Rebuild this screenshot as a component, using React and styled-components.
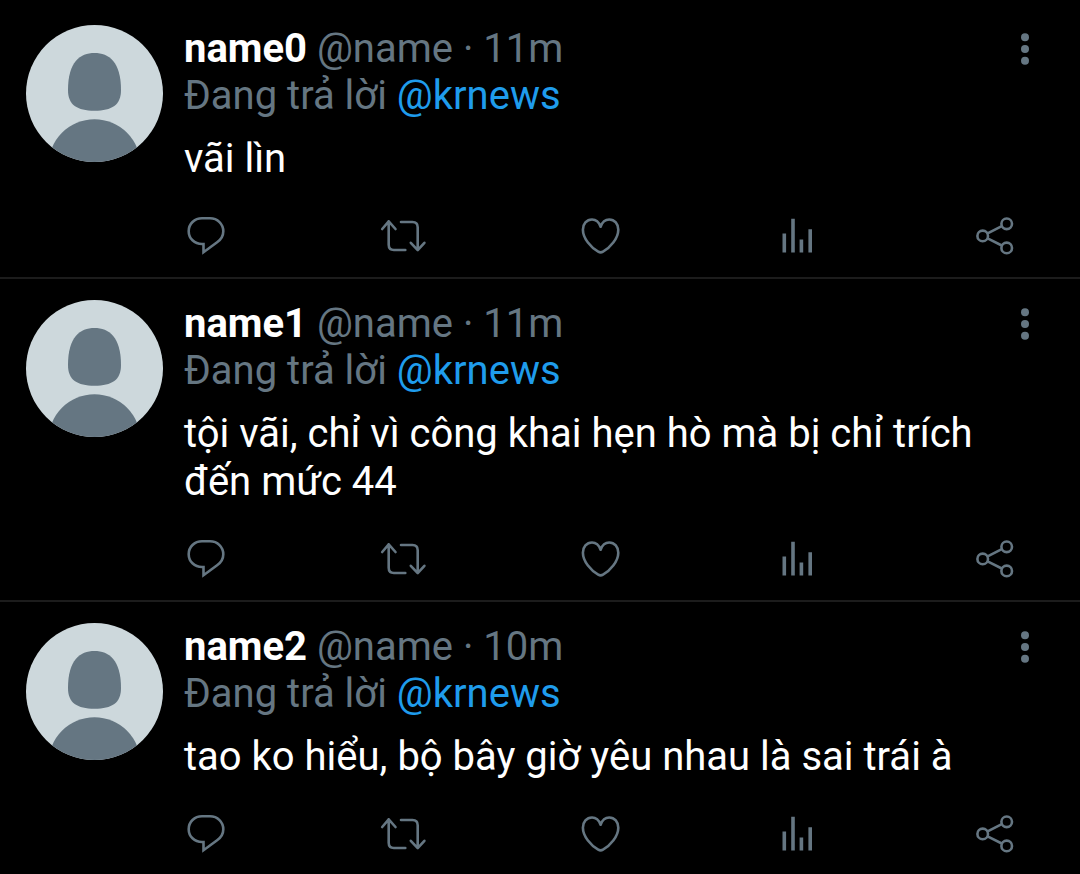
import React from 'react';
import styled, { createGlobalStyle } from 'styled-components';

const GlobalStyle = createGlobalStyle`
  :root {
    --background: #000;
    --text: #fff;
    --muted: #657682;
    --link: #1f9cec;
    --divider: #1c1c1c;
    --avatar: #cdd8dc;
  }

  body {
    margin: 0;
    background: var(--background);
    color: var(--text);
    font-family: Roboto, 'Noto Sans', sans-serif;
    font-size: 40px;
    line-height: 47px;
  }
`;

const TWEETS = [
  { name: 'name0', handle: '@name', time: '11m', replyTo: '@krnews', text: 'vãi lìn' },
  {
    name: 'name1',
    handle: '@name',
    time: '11m',
    replyTo: '@krnews',
    text: 'tội vãi, chỉ vì công khai hẹn hò mà bị chỉ trích đến mức 44',
  },
  {
    name: 'name2',
    handle: '@name',
    time: '10m',
    replyTo: '@krnews',
    text: 'tao ko hiểu, bộ bây giờ yêu nhau là sai trái à',
  },
];

const Timeline = styled.main`
  padding-top: 4px;
`;

const TweetRow = styled.article`
  display: flex;
  gap: 21px;
  padding: 21px 51px 19px 26px;
  border-bottom: 2px solid var(--divider);

  &:last-child {
    padding-bottom: 16px;
    border-bottom: none;
  }
`;

const Avatar = styled.svg`
  flex: none;
  width: 137px;
  height: 137px;
  border-radius: 50%;
  background: var(--avatar);
  fill: var(--muted);
`;

const Content = styled.div`
  flex: 1;
  min-width: 0;
`;

const Header = styled.header`
  display: flex;
  justify-content: space-between;
  align-items: center;
`;

const Byline = styled.div`
  color: var(--muted);
`;

const Name = styled.strong`
  color: var(--text);
  font-weight: 700;
`;

const ReplyLine = styled.p`
  margin: 0;
  color: var(--muted);
`;

const Mention = styled.a`
  color: var(--link);
  text-decoration: none;
`;

const Body = styled.p`
  margin: 16px 0 31px;
  padding-right: 20px;
  line-height: 48px;
`;

const Actions = styled.div`
  display: flex;
  justify-content: space-between;
  margin-right: 12px;
`;

const IconButton = styled.button`
  display: flex;
  width: ${props => props.$width};
  height: 44px;
  padding: 0;
  border: none;
  background: none;
  color: var(--muted);
  cursor: pointer;
`;

const Icon = styled.svg`
  width: 100%;
  height: 100%;
  overflow: visible;
  fill: ${props => (props.$solid ? 'currentColor' : 'none')};
  stroke: ${props => (props.$solid ? 'none' : 'currentColor')};
  stroke-width: 2.6;
`;

const ACTIONS = [
  {
    label: 'Reply',
    drawing: (
      <path d="M18 4.3h8c7.6 0 13.3 5.7 13.3 13 0 4.6-2.3 8.3-6.2 11L19.5 38.2V30H18C10.4 30 4.7 24.4 4.7 17.2S10.4 4.3 18 4.3z" />
    ),
  },
  {
    label: 'Retweet',
    drawing: (
      <g strokeLinecap="round" strokeLinejoin="round">
        <path d="M1.2 15l6.5-7.6 6.8 7.6M7.7 7.4v23.4q0 5.2 5.2 5.2h11.4" />
        <path d="M20 8h11.5q5.2 0 5.2 5.2V36M29.8 28.8l6.9 7.4 6.7-7.4" />
      </g>
    ),
  },
  {
    label: 'Like',
    drawing: (
      <path
        strokeLinejoin="round"
        d="M21.6 12.7C19.9 8 16.7 5.5 13 5.5c-5.4 0-9.1 4.5-9.1 10.2 0 8.8 8.3 18 15.3 22 1.6.9 3.2.9 4.8 0 7-4 15.3-13.2 15.3-22 0-5.7-3.7-10.2-9.1-10.2-3.7 0-6.9 2.5-8.6 7.2z"
      />
    ),
  },
  {
    label: 'Analytics',
    solid: true,
    drawing: (
      <path d="M6.5 19.4h3.6v19.2H6.5zM15.2 4.8h3.6v33.8h-3.6zM23.6 25.4h3.6v13.2h-3.6zM32.4 15.2H36v23.4h-3.6z" />
    ),
  },
  {
    label: 'Share',
    drawing: (
      <>
        <circle cx="9.7" cy="21.9" r="5.3" />
        <circle cx="33.7" cy="9.8" r="5.3" />
        <circle cx="33.7" cy="33.9" r="5.3" />
        <path d="M14.6 19.4l14.2-7.2M14.6 24.3l14.2 7.2" />
      </>
    ),
  },
];

function Tweet({ tweet }) {
  return (
    <TweetRow>
      <Avatar viewBox="0 0 137 137" role="img" aria-label={tweet.name}>
        <path d="M68.5 28C83 28 95 37 95 65c0 15-9 20.7-26.5 20.7S42 80 42 65c0-28 12-37 26.5-37z" />
        <circle cx="68.5" cy="140.3" r="46" />
      </Avatar>
      <Content>
        <Header>
          <Byline>
            <Name>{tweet.name}</Name> {tweet.handle} · {tweet.time}
          </Byline>
          <IconButton $width="8px" aria-label="More">
            <Icon $solid viewBox="0 0 8 44">
              <circle cx="4" cy="10.2" r="4" />
              <circle cx="4" cy="22" r="4" />
              <circle cx="4" cy="33.8" r="4" />
            </Icon>
          </IconButton>
        </Header>
        <ReplyLine>
          Đang trả lời <Mention href="#krnews">{tweet.replyTo}</Mention>
        </ReplyLine>
        <Body>{tweet.text}</Body>
        <Actions>
          {ACTIONS.map(action => (
            <IconButton key={action.label} $width="44px" aria-label={action.label}>
              <Icon $solid={action.solid} viewBox="0 0 44 44">
                {action.drawing}
              </Icon>
            </IconButton>
          ))}
        </Actions>
      </Content>
    </TweetRow>
  );
}

export default function App() {
  return (
    <>
      <GlobalStyle />
      <Timeline>
        {TWEETS.map(tweet => (
          <Tweet key={tweet.name} tweet={tweet} />
        ))}
      </Timeline>
    </>
  );
}
